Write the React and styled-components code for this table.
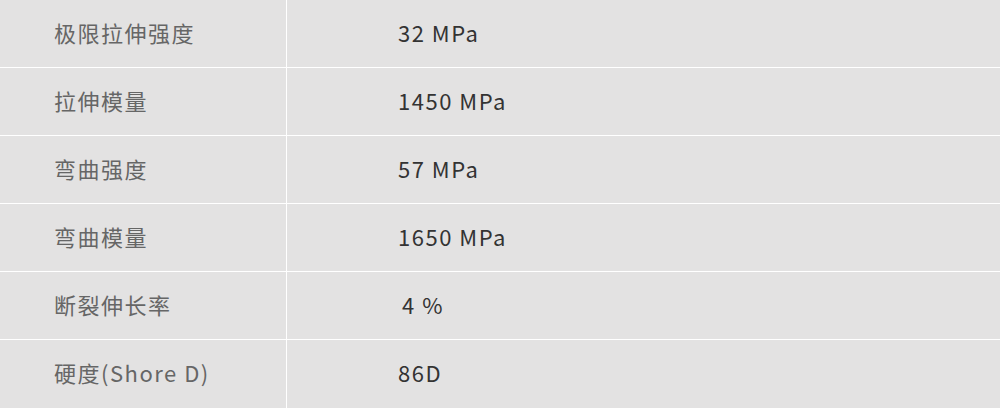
import React from "react";
import styled, { createGlobalStyle } from "styled-components";

const Global = createGlobalStyle`
  html, body { margin: 0; padding: 0; background: #e3e2e2; }
  body { font-family: "Noto Sans CJK SC", "Noto Sans", sans-serif; }
`;

const Table = styled.div`
  width: 1000px;
  height: 409px;
  background: #e3e2e2;
  display: flex;
  flex-direction: column;
`;

const Row = styled.div`
  display: grid;
  grid-template-columns: 287px 1fr;
  height: 67px;
  flex: ${(p) => (p.$last ? "1 0 auto" : "0 0 auto")};
  border-bottom: 1px solid #ffffff;
  box-sizing: content-box;
`;

const Cell = styled.div`
  display: flex;
  align-items: center;
  padding-bottom: 4px;
  box-sizing: border-box;
  font-size: 22px;
  letter-spacing: 1.5px;
  white-space: pre;
`;

const Label = styled(Cell)`
  padding-left: 54px;
  color: #666666;
  border-right: 1px solid #ffffff;
`;

const Value = styled(Cell)`
  padding-left: ${(p) => p.$indent || 111}px;
  color: #333333;
`;

const rows = [
  ["极限拉伸强度", "32 MPa"],
  ["拉伸模量", "1450 MPa"],
  ["弯曲强度", "57 MPa"],
  ["弯曲模量", "1650 MPa"],
  ["断裂伸长率", "4 %", 115],
  ["硬度(Shore D)", "86D"],
];

export default function App() {
  return (
    <>
      <Global />
      <Table>
        {rows.map(([k, v, indent], i) => (
          <Row key={k} $last={i === rows.length - 1}>
            <Label>{k}</Label>
            <Value $indent={indent}>{v}</Value>
          </Row>
        ))}
      </Table>
    </>
  );
}
